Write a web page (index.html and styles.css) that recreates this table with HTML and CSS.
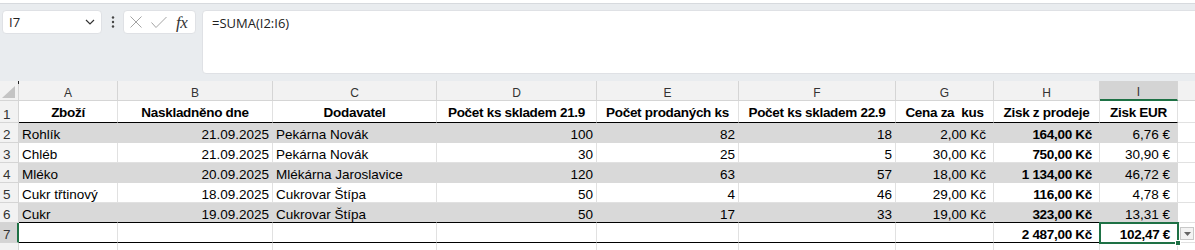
FILE: index.html
```html
<!DOCTYPE html>
<html lang="cs">
<head>
    <meta charset="UTF-8">
    <meta name="viewport" content="width=device-width, initial-scale=1.0">
    <title>Sešit1</title>
    <link rel="stylesheet" href="styles.css">
</head>
<body>
    <div class="ribbon-edge"></div>

    <div class="formula-bar">
        <div class="name-box">
            <span>I7</span>
            <svg width="10" height="6" viewBox="0 0 10 6"><path d="M1 1l4 4 4-4" fill="none" stroke="#333" stroke-width="1.2"/></svg>
        </div>
        <div class="more">
            <svg width="4" height="12" viewBox="0 0 4 12"><circle cx="2" cy="1.5" r="1.2" fill="#444"/><circle cx="2" cy="6" r="1.2" fill="#444"/><circle cx="2" cy="10.5" r="1.2" fill="#444"/></svg>
        </div>
        <div class="fx-group">
            <svg class="cancel" width="12" height="12" viewBox="0 0 12 12"><path d="M0.5 0.5l11 11M11.5 0.5l-11 11" stroke="#a3a3a3" stroke-width="1"/></svg>
            <svg class="enter" width="16" height="11" viewBox="0 0 16 11"><path d="M0.5 5.5l4.5 5 10.5-10.5" fill="none" stroke="#a3a3a3" stroke-width="1"/></svg>
            <span class="fx">fx</span>
        </div>
        <div class="formula-input">=SUMA(I2:I6)</div>
    </div>

    <div class="sheet">
        <div class="row">
            <div class="corner"><svg width="13" height="12" viewBox="0 0 13 12"><polygon points="13,0 13,12 0,12" fill="#c4c4c4"/></svg></div>
            <div class="ch">A</div>
            <div class="ch">B</div>
            <div class="ch">C</div>
            <div class="ch">D</div>
            <div class="ch">E</div>
            <div class="ch">F</div>
            <div class="ch">G</div>
            <div class="ch">H</div>
            <div class="ch sel">I</div>
            <div class="ch"></div>
        </div>

        <div class="row titles end">
            <div class="rh">1</div>
            <div class="cell d">Zboží</div>
            <div class="cell d">Naskladněno dne</div>
            <div class="cell d">Dodavatel</div>
            <div class="cell d">Počet ks skladem 21.9</div>
            <div class="cell d">Počet prodaných ks</div>
            <div class="cell d">Počet ks skladem 22.9</div>
            <div class="cell d">Cena za  kus</div>
            <div class="cell d">Zisk z prodeje</div>
            <div class="cell d">Zisk EUR</div>
            <div class="cell"></div>
        </div>

        <div class="row fill">
            <div class="rh">2</div>
            <div class="cell d">Rohlík</div>
            <div class="cell d r">21.09.2025</div>
            <div class="cell d">Pekárna Novák</div>
            <div class="cell d r">100</div>
            <div class="cell d r">82</div>
            <div class="cell d r">18</div>
            <div class="cell d r cur">2,00 Kč</div>
            <div class="cell d r cur b">164,00 Kč</div>
            <div class="cell d r cur">6,76 €</div>
            <div class="cell"></div>
        </div>

        <div class="row">
            <div class="rh">3</div>
            <div class="cell d">Chléb</div>
            <div class="cell d r">21.09.2025</div>
            <div class="cell d">Pekárna Novák</div>
            <div class="cell d r">30</div>
            <div class="cell d r">25</div>
            <div class="cell d r">5</div>
            <div class="cell d r cur">30,00 Kč</div>
            <div class="cell d r cur b">750,00 Kč</div>
            <div class="cell d r cur">30,90 €</div>
            <div class="cell"></div>
        </div>

        <div class="row fill">
            <div class="rh">4</div>
            <div class="cell d">Mléko</div>
            <div class="cell d r">20.09.2025</div>
            <div class="cell d">Mlékárna Jaroslavice</div>
            <div class="cell d r">120</div>
            <div class="cell d r">63</div>
            <div class="cell d r">57</div>
            <div class="cell d r cur">18,00 Kč</div>
            <div class="cell d r cur b">1 134,00 Kč</div>
            <div class="cell d r cur">46,72 €</div>
            <div class="cell"></div>
        </div>

        <div class="row">
            <div class="rh">5</div>
            <div class="cell d">Cukr třtinový</div>
            <div class="cell d r">18.09.2025</div>
            <div class="cell d">Cukrovar Štípa</div>
            <div class="cell d r">50</div>
            <div class="cell d r">4</div>
            <div class="cell d r">46</div>
            <div class="cell d r cur">29,00 Kč</div>
            <div class="cell d r cur b">116,00 Kč</div>
            <div class="cell d r cur">4,78 €</div>
            <div class="cell"></div>
        </div>

        <div class="row fill end">
            <div class="rh">6</div>
            <div class="cell d">Cukr</div>
            <div class="cell d r">19.09.2025</div>
            <div class="cell d">Cukrovar Štípa</div>
            <div class="cell d r">50</div>
            <div class="cell d r">17</div>
            <div class="cell d r">33</div>
            <div class="cell d r cur">19,00 Kč</div>
            <div class="cell d r cur b">323,00 Kč</div>
            <div class="cell d r cur">13,31 €</div>
            <div class="cell"></div>
        </div>

        <div class="row end">
            <div class="rh sel">7</div>
            <div class="cell d"></div>
            <div class="cell d"></div>
            <div class="cell d"></div>
            <div class="cell d"></div>
            <div class="cell d"></div>
            <div class="cell d"></div>
            <div class="cell d"></div>
            <div class="cell d r cur b">2 487,00 Kč</div>
            <div class="cell d r cur b active">102,47 €</div>
            <div class="cell"></div>
        </div>

        <div class="row">
            <div class="rh">8</div>
            <div class="cell"></div>
            <div class="cell"></div>
            <div class="cell"></div>
            <div class="cell"></div>
            <div class="cell"></div>
            <div class="cell"></div>
            <div class="cell"></div>
            <div class="cell"></div>
            <div class="cell"></div>
            <div class="cell"></div>
        </div>

        <!-- selection fill handle and paste options button -->
        <div class="fill-handle"></div>
        <div class="paste-options">
            <svg width="7" height="4" viewBox="0 0 7 4"><polygon points="0,0 7,0 3.5,4" fill="#666"/></svg>
        </div>
    </div>
</body>
</html>
```

FILE: styles.css
```css
* {
    margin: 0;
    padding: 0;
    box-sizing: border-box;
}

body {
    width: 1195px;
    height: 250px;
    overflow: hidden;
    background: #e9ecef;
    font-family: 'Liberation Sans', Arial, sans-serif;
    color: #000;
}

.ribbon-edge {
    height: 4px;
    background: #fff;
    border-bottom: 1px solid #d7dade;
}

/* formula bar */

.formula-bar {
    display: flex;
    align-items: flex-start;
    height: 77px;
    padding: 6px 0 0 2px;
    font-family: 'Open Sans', 'Noto Sans', sans-serif;
    font-size: 13px;
    color: #222;
}

.name-box {
    width: 100px;
    height: 24px;
    display: flex;
    align-items: center;
    justify-content: space-between;
    padding: 0 6px 0 6px;
    background: #fff;
    border: 1px solid #dfe1e5;
    border-radius: 4px;
}

.more {
    width: 21px;
    height: 24px;
    display: flex;
    align-items: center;
    justify-content: center;
}

.fx-group {
    width: 73px;
    height: 24px;
    display: flex;
    align-items: center;
    padding-left: 6px;
    background: #fff;
    border: 1px solid #dfe1e5;
    border-radius: 4px;
}

.fx-group .enter {
    margin-left: 9px;
    margin-top: 1px;
}

.fx {
    margin-left: 9px;
    font-family: 'Liberation Serif', 'Times New Roman', serif;
    font-style: italic;
    font-size: 17px;
    color: #333;
    letter-spacing: -0.5px;
    line-height: 1;
}

.formula-input {
    flex: 1;
    height: 64px;
    margin: 0 -8px 0 6px;
    padding: 3px 9px;
    line-height: 18px;
    background: #fff;
    border: 1px solid #dfe1e5;
    border-radius: 4px;
}

/* grid */

.sheet {
    position: relative;
    height: 169px;
    display: grid;
    grid-template-columns: 19px 99px 155px 164px 160px 142px 157px 98px 106px 78px 80px;
    grid-template-rows: 20px 22px repeat(7, 20px);
    background: #fff;
    font-size: 13.5px;
    overflow: hidden;
}

.row {
    display: contents;
}

.corner,
.ch,
.rh {
    background: #f2f2f2;
    border-right: 1px solid #d5d5d5;
    border-bottom: 1px solid #d5d5d5;
    color: #333;
}

.corner {
    position: relative;
    display: flex;
    align-items: flex-end;
    justify-content: flex-end;
    padding: 0 3px 2px 0;
}

.corner::after {
    content: "";
    position: absolute;
    top: 0;
    right: -1px;
    width: 1px;
    height: 3px;
    background: #222;
}

.ch {
    display: flex;
    align-items: flex-end;
    justify-content: center;
    font-size: 12px;
}

.ch.sel {
    background: #d4d4d4;
    border-bottom: 2px solid #1e7145;
    padding-top: 1px;
}

.rh {
    display: flex;
    align-items: flex-end;
    padding-left: 3px;
}

.rh.sel {
    background: #d4d4d4;
    border-right: 2px solid #1e7145;
}

.cell {
    display: flex;
    align-items: flex-end;
    padding: 0 3px;
    white-space: pre;
    overflow: hidden;
    border-right: 1px solid #e1e1e1;
    border-bottom: 1px solid #e1e1e1;
}

.cell.r {
    justify-content: flex-end;
}

.cell.cur {
    padding-right: 7px;
}

.cell.b,
.titles .cell {
    font-weight: bold;
    letter-spacing: -0.3px;
}

.titles .cell {
    justify-content: center;
    padding-bottom: 2px;
}

.fill > .d {
    background: #d9d9d9;
    border-right-color: #d9d9d9;
    border-bottom-color: #d9d9d9;
}

.end > .d {
    border-bottom-color: #000;
}

.cell.active {
    position: relative;
    z-index: 1;
    outline: 2px solid #1e7145;
    outline-offset: -1px;
}

.fill-handle {
    position: absolute;
    left: 1175px;
    top: 159px;
    width: 6px;
    height: 6px;
    background: #1e7145;
    border: 1px solid #fff;
    z-index: 2;
}

.paste-options {
    position: absolute;
    left: 1180px;
    top: 146px;
    width: 14px;
    height: 13px;
    display: flex;
    align-items: center;
    justify-content: center;
    background: #f3f3f3;
    border: 1px solid #c8c8c8;
    z-index: 2;
}
```
